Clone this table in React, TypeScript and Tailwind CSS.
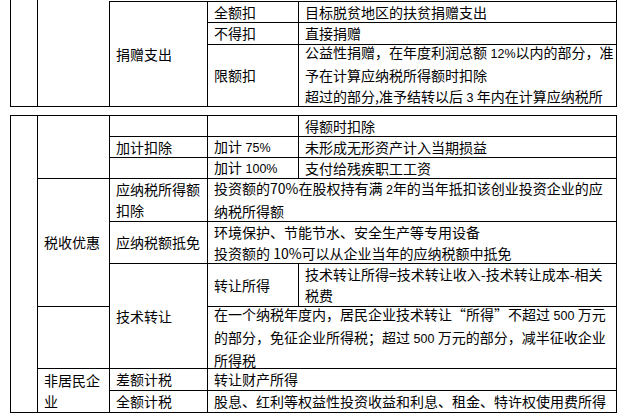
import type { ReactNode } from "react"

function Cell({ className = "", children }: { className?: string; children?: ReactNode }) {
  return (
    <div className={`flex items-center border-l border-t border-black pl-[6px] pr-[3px] whitespace-nowrap ${className}`}>
      <div>{children}</div>
    </div>
  )
}

// 半角数字用较窄的字体，和原表一致
function Num({ children }: { children: ReactNode }) {
  return <span className="text-[12.5px]" style={{ fontFamily: '"Liberation Sans", sans-serif' }}>{children}</span>
}

export default function App() {
  return (
    <div
      lang="zh-CN"
      className="w-[624px] h-[417px] overflow-hidden bg-white text-black text-[14px] leading-[21px]"
      style={{ fontFamily: '"Noto Sans CJK SC", "Noto Sans", sans-serif' }}
    >
      {/* 上一页延续的部分 */}
      <div className="ml-[10px] grid w-[607px] grid-cols-[27px_72px_98px_91px_318px] grid-rows-[1px_21px_22px_62px] border-r border-b border-black">
        <div className="col-start-1 row-start-1 row-span-4 border-l border-black" />
        <div className="col-start-2 row-start-1 row-span-4 border-l border-black" />
        <Cell className="col-start-3 row-start-2 row-span-3">捐赠支出</Cell>
        <Cell className="col-start-4 row-start-2">全额扣</Cell>
        <Cell className="col-start-5 row-start-2 pl-[5px]">目标脱贫地区的扶贫捐赠支出</Cell>
        <Cell className="col-start-4 row-start-3">不得扣</Cell>
        <Cell className="col-start-5 row-start-3 pl-[5px]">直接捐赠</Cell>
        <Cell className="col-start-4 row-start-4">限额扣</Cell>
        <Cell className="col-start-5 row-start-4 pl-[5px]">
          公益性捐赠，在年度利润总额<Num> 12%</Num>以内的部分，准
          <br />
          予在计算应纳税所得额时扣除
          <br />
          超过的部分,准予结转以后<Num> 3 </Num>年内在计算应纳税所
        </Cell>
      </div>

      <div className="mt-[8px] ml-[10px] grid w-[607px] grid-cols-[27px_72px_98px_91px_318px] grid-rows-[21px_21px_21px_43px_42px_43px_62px_22px_22px] border-r border-b border-black">
        <Cell className="col-start-1 row-start-1 row-span-9" />

        <Cell className="col-start-2 row-start-1 row-span-3" />
        <Cell className="col-start-2 row-start-4 row-span-3">税收优惠</Cell>
        <Cell className="col-start-2 row-start-7" />
        <Cell className="col-start-2 row-start-8 row-span-2 whitespace-normal">
          非居民企
          <br />
          业
        </Cell>

        <Cell className="col-start-3 row-start-1" />
        <Cell className="col-start-4 row-start-1" />
        <Cell className="col-start-5 row-start-1 pl-[5px]">得额时扣除</Cell>

        <Cell className="col-start-3 row-start-2">加计扣除</Cell>
        <Cell className="col-start-4 row-start-2">加计<Num> 75%</Num></Cell>
        <Cell className="col-start-5 row-start-2 pl-[5px]">未形成无形资产计入当期损益</Cell>

        <Cell className="col-start-3 row-start-3" />
        <Cell className="col-start-4 row-start-3">加计<Num> 100%</Num></Cell>
        <Cell className="col-start-5 row-start-3 pl-[5px]">支付给残疾职工工资</Cell>

        <Cell className="col-start-3 row-start-4">
          应纳税所得额
          <br />
          扣除
        </Cell>
        <Cell className="col-start-4 col-span-2 row-start-4">
          投资额的70%在股权持有满<Num> 2</Num>年的当年抵扣该创业投资企业的应
          <br />
          纳税所得额
        </Cell>

        <Cell className="col-start-3 row-start-5">应纳税额抵免</Cell>
        <Cell className="col-start-4 col-span-2 row-start-5">
          环境保护、节能节水、安全生产等专用设备
          <br />
          投资额的 10%可以从企业当年的应纳税额中抵免
        </Cell>

        <Cell className="col-start-3 row-start-6 row-span-2">技术转让</Cell>
        <Cell className="col-start-4 row-start-6">转让所得</Cell>
        <Cell className="col-start-5 row-start-6 pl-[5px]">
          技术转让所得=技术转让收入-技术转让成本-相关
          <br />
          税费
        </Cell>
        <Cell className="col-start-4 col-span-2 row-start-7">
          在一个纳税年度内，居民企业技术转让“所得”不超过<Num> 500 </Num>万元
          <br />
          的部分，免征企业所得税；超过<Num> 500 </Num>万元的部分，减半征收企业
          <br />
          所得税
        </Cell>

        <Cell className="col-start-3 row-start-8">差额计税</Cell>
        <Cell className="col-start-4 col-span-2 row-start-8">转让财产所得</Cell>
        <Cell className="col-start-3 row-start-9">全额计税</Cell>
        <Cell className="col-start-4 col-span-2 row-start-9">股息、红利等权益性投资收益和利息、租金、特许权使用费所得</Cell>
      </div>
    </div>
  )
}
